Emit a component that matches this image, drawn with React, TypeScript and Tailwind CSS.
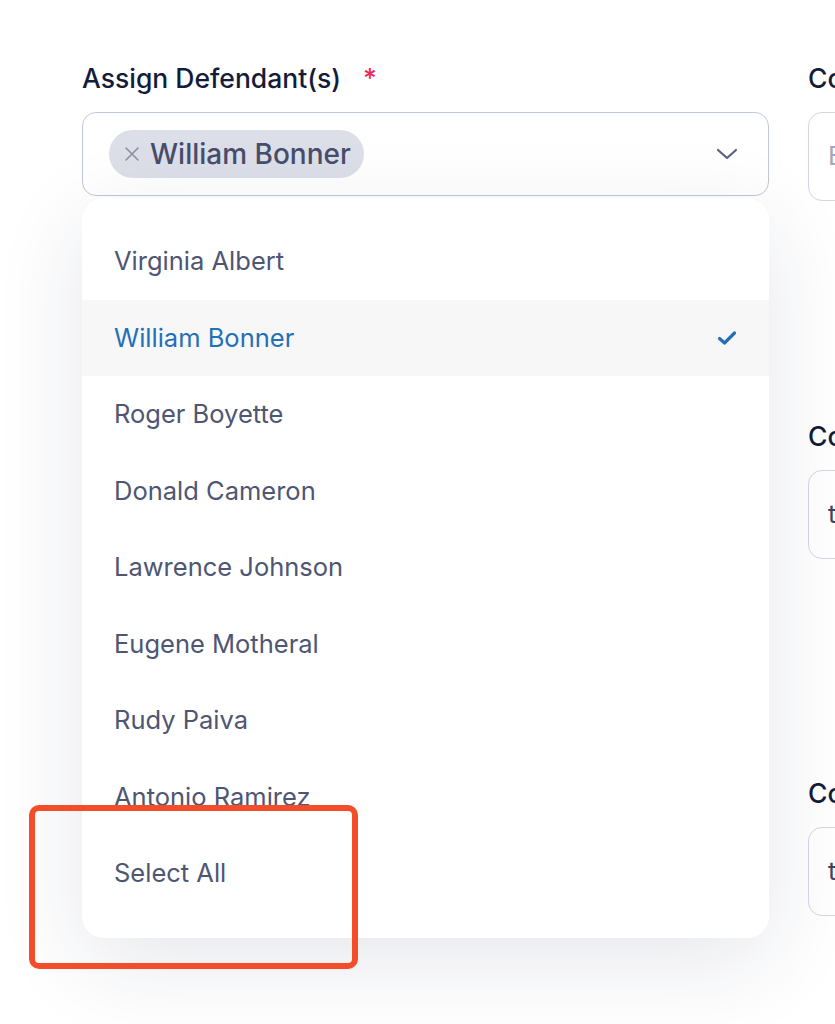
import React from "react";

const names = [
  "Virginia Albert",
  "William Bonner",
  "Roger Boyette",
  "Donald Cameron",
  "Lawrence Johnson",
  "Eugene Motheral",
  "Rudy Paiva",
  "Antonio Ramirez",
];

export default function App() {
  return (
    <div
      className="relative w-[835px] h-[1024px] overflow-hidden bg-white"
      style={{ fontFamily: "Inter, 'Noto Sans', sans-serif" }}
    >
      <div className="flex gap-[39px] pl-[82px] pt-[62px]">
        {/* Left column */}
        <div className="relative w-[687px] shrink-0">
          <div className="flex items-center h-[32px] text-[26.5px] font-medium text-[#131c3a] leading-none">
            Assign Defendant(s)
            <span className="ml-[22px] text-[#f0285a]">*</span>
          </div>
          <div className="mt-[18px] h-[84px] rounded-[14px] border-[1.5px] border-[#c2c6dc] bg-white flex items-center pl-[26px] pr-[30px] justify-between">
            <div className="flex items-center h-[48px] rounded-full bg-[#dcdfe8] pl-[15px] pr-[13px]">
              <svg width="16" height="16" viewBox="0 0 16 16" className="mr-[10px]">
                <path d="M2 2 L14 14 M14 2 L2 14" stroke="#8b90a4" strokeWidth="1.6" strokeLinecap="round" />
              </svg>
              <span className="text-[28px] font-medium text-[#474e6c] leading-none">William Bonner</span>
            </div>
            <svg width="22" height="14" viewBox="0 0 22 14">
              <path d="M2 3 L11 11 L20 3" fill="none" stroke="#5b6381" strokeWidth="2.2" strokeLinecap="round" strokeLinejoin="round" />
            </svg>
          </div>

          {/* Dropdown menu */}
          <div className="absolute left-0 top-[136px] z-10 w-[687px] h-[740px] rounded-[22px] bg-white shadow-[0_24px_90px_rgba(25,35,75,0.11)] overflow-hidden flex flex-col">
            <div className="h-[610px] overflow-hidden pt-[25px]">
              {names.map((n, i) => {
                const sel = i === 1;
                return (
                  <div
                    key={n}
                    className={`h-[76.5px] flex items-center justify-between pl-[32px] pr-[32px] text-[25.5px] ${
                      sel ? "bg-[#f7f7f8] text-[#2470b6]" : "text-[#4e5673]"
                    }`}
                  >
                    <span>{n}</span>
                    {sel && (
                      <svg width="20" height="16" viewBox="0 0 20 16">
                        <path d="M2.5 8.5 L7.5 13 L17.5 3" fill="none" stroke="#2470b6" strokeWidth="3.2" strokeLinecap="round" strokeLinejoin="round" />
                      </svg>
                    )}
                  </div>
                );
              })}
            </div>
            <div className="flex-1 flex items-center pl-[32px] text-[25.5px] text-[#4e5673] bg-white">
              Select All
            </div>
          </div>
        </div>

        {/* Right column */}
        <div className="w-[300px] shrink-0">
          <div className="h-[32px] flex items-center text-[26.5px] font-medium text-[#131c3a] leading-none">Court Name</div>
          <div className="mt-[18px] h-[89px] rounded-[14px] border-[1.5px] border-[#d4d7e4] bg-white flex items-center pl-[19px] text-[25.5px] text-[#a3a7ba]">
            Enter
          </div>

          <div className="mt-[219px] h-[32px] flex items-center text-[26.5px] font-medium text-[#131c3a] leading-none">Court Date</div>
          <div className="mt-[18px] h-[89px] rounded-[14px] border-[1.5px] border-[#d4d7e4] bg-white flex items-center pl-[19px] text-[25.5px] text-[#3d4460]">
            test
          </div>

          <div className="mt-[218px] h-[32px] flex items-center text-[26.5px] font-medium text-[#131c3a] leading-none">Court Time</div>
          <div className="mt-[18px] h-[89px] rounded-[14px] border-[1.5px] border-[#d4d7e4] bg-white flex items-center pl-[19px] text-[25.5px] text-[#3d4460]">
            test
          </div>
        </div>
      </div>

      {/* Annotation box */}
      <div className="absolute z-20 left-[29px] top-[805px] w-[329px] h-[164px] rounded-[10px] border-[6px] border-[#f24e2a]" />
    </div>
  );
}
